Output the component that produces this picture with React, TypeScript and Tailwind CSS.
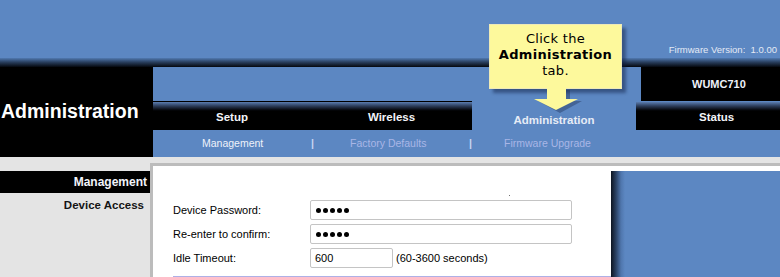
const blue = "bg-[#5c87c2]";

const tabDark =
  "bg-[linear-gradient(to_bottom,#5b7db0_0px,#2c3d5a_4px,#06080d_8px,#000_9px)]";

function Callout() {
  return (
    <>
      <div className="absolute left-[489px] top-[24px] w-[133px] h-[65px] bg-[#fdf99c] border border-[#eeeab8] shadow-[4px_4px_3px_rgba(10,25,60,0.45)] text-center font-['DejaVu_Sans',Verdana,sans-serif] text-[13px] leading-[16px] text-black pt-[6px] tracking-[0.3px]">
        <div>Click the</div>
        <div className="font-bold">Administration</div>
        <div>tab.</div>
      </div>
      <svg
        className="absolute left-[534px] top-[88px]"
        width="50"
        height="26"
        viewBox="0 0 50 26"
      >
        <polygon
          points="17,2 36,2 36,13 48,13 26,25 4,13 17,13"
          fill="rgba(20,35,70,0.35)"
        />
        <polygon
          points="13,0 32,0 32,11 44,11 22,22 0,11 13,11"
          fill="#fdf99c"
        />
      </svg>
    </>
  );
}

function SubNav() {
  return (
    <div className={`h-[27px] ${blue} flex items-center text-[10.5px]`}>
      <span className="w-[49px]" />
      <span className="w-[109px] text-[#eef2fa]">Management</span>
      <span className="w-[39px] font-bold text-[#c9d6f2]">|</span>
      <span className="w-[119px] text-[#a9b6e6]">Factory Defaults</span>
      <span className="w-[35px] font-bold text-[#c9d6f2]">|</span>
      <span className="text-[#a9b6e6]">Firmware Upgrade</span>
    </div>
  );
}

function Field({
  label,
  children,
}: {
  label: string;
  children: React.ReactNode;
}) {
  return (
    <div className="flex h-[20px] items-center">
      <div className="w-[137px] text-[11px] text-black">{label}</div>
      {children}
    </div>
  );
}

function Dots() {
  return (
    <div className="flex gap-[2px] pl-[5px]">
      {[0, 1, 2, 3, 4].map((i) => (
        <span key={i} className="w-[5px] h-[5px] rounded-full bg-black" />
      ))}
    </div>
  );
}

export default function App() {
  return (
    <div className="relative w-[780px] h-[277px] overflow-hidden bg-[#e4e4e4] font-['Liberation_Sans',Arial,sans-serif]">
      {/* top banner */}
      <div
        className={`h-[58px] ${blue} flex items-end justify-end pr-[3px] pb-[3px]`}
      >
        <span className="text-[9.5px] leading-[11px] text-[#e4eaf5] whitespace-pre">
          Firmware Version:  1.0.00
        </span>
      </div>
      <div className="h-[9px] bg-[linear-gradient(to_bottom,#5079b0,#2a4060_45%,#05080e)]" />

      {/* title + tabs */}
      <div className="flex h-[90px]">
        <div className="w-[153px] bg-black flex items-center pl-[1px]">
          <span className="text-[19.5px] font-bold text-white">Administration</span>
        </div>
        <div className="flex-1 flex flex-col">
          <div className="h-[34px] flex">
            <div className={`flex-1 ${blue}`} />
            <div className="w-[139px] bg-black flex items-center pl-[51px] text-[11px] font-bold text-[#eef2fa]">
              WUMC710
            </div>
          </div>
          <div className="h-[1px] flex">
            <div className="w-[319px] bg-black" />
            <div className={`flex-1 ${blue}`} />
          </div>
          <div className="h-[28px] flex text-[11.5px] font-bold">
            <div
              className={`w-[158px] ${tabDark} flex items-center justify-center pt-[4px] text-[#f2f4f8]`}
            >
              Setup
            </div>
            <div
              className={`w-[161px] ${tabDark} flex items-center justify-center pt-[4px] text-[#f2f4f8]`}
            >
              Wireless
            </div>
            <div
              className={`w-[164px] ${blue} flex items-center justify-center pt-[10px] text-[#e6ecf6]`}
            >
              Administration
            </div>
            <div
              className={`flex-1 ${tabDark} flex items-center pl-[63px] pt-[4px] text-[#f2f4f8]`}
            >
              Status
            </div>
          </div>
          <SubNav />
        </div>
      </div>

      {/* body */}
      <div className="flex h-[120px]">
        <div className="w-[150px] flex flex-col pt-[14px]">
          <div className="h-[22px] bg-black flex items-center justify-end pr-[3px] text-[12px] font-bold text-[#f2f4fa]">
            Management
          </div>
          <div className="mt-[5px] text-right pr-[6px] text-[11.5px] leading-[14px] font-bold text-[#141414]">
            Device Access
          </div>
        </div>
        <div className="flex-1 flex flex-col pt-[6px]">
          <div className="flex-1 flex border-t-[3px] border-l-[3px] border-[#bcbcbc] bg-white">
            <div className="w-[458px] flex flex-col pl-[20px] pt-[29px]">
              <div className="h-[1px] flex">
                <span className="ml-[336px] w-[1px] h-[1px] bg-[#707070]" />
              </div>
              <div className="mt-[4px] flex flex-col gap-[4px]">
                <Field label="Device Password:">
                  <div className="w-[262px] h-[20px] border border-[#c4c4c4] rounded-[2px] flex items-center">
                    <Dots />
                  </div>
                </Field>
                <Field label="Re-enter to confirm:">
                  <div className="w-[262px] h-[20px] border border-[#c4c4c4] rounded-[2px] flex items-center">
                    <Dots />
                  </div>
                </Field>
                <Field label="Idle Timeout:">
                  <div className="w-[83px] h-[20px] border border-[#c4c4c4] rounded-[2px] flex items-center pl-[4px] text-[11px] text-black">
                    600
                  </div>
                  <span className="ml-[3px] text-[11px] text-black">
                    (60-3600 seconds)
                  </span>
                </Field>
              </div>
              <div className="mt-[8px] h-[1px] bg-[#aeb0e6]" />
            </div>
            <div className="flex-1 flex flex-col pt-[5px]">
              <div className="flex-1 bg-[linear-gradient(to_right,#0e1521,#2b4264_5px,#4f76ad_10px,#5c87c2_14px)]" />
            </div>
          </div>
        </div>
      </div>

      <Callout />
    </div>
  );
}
